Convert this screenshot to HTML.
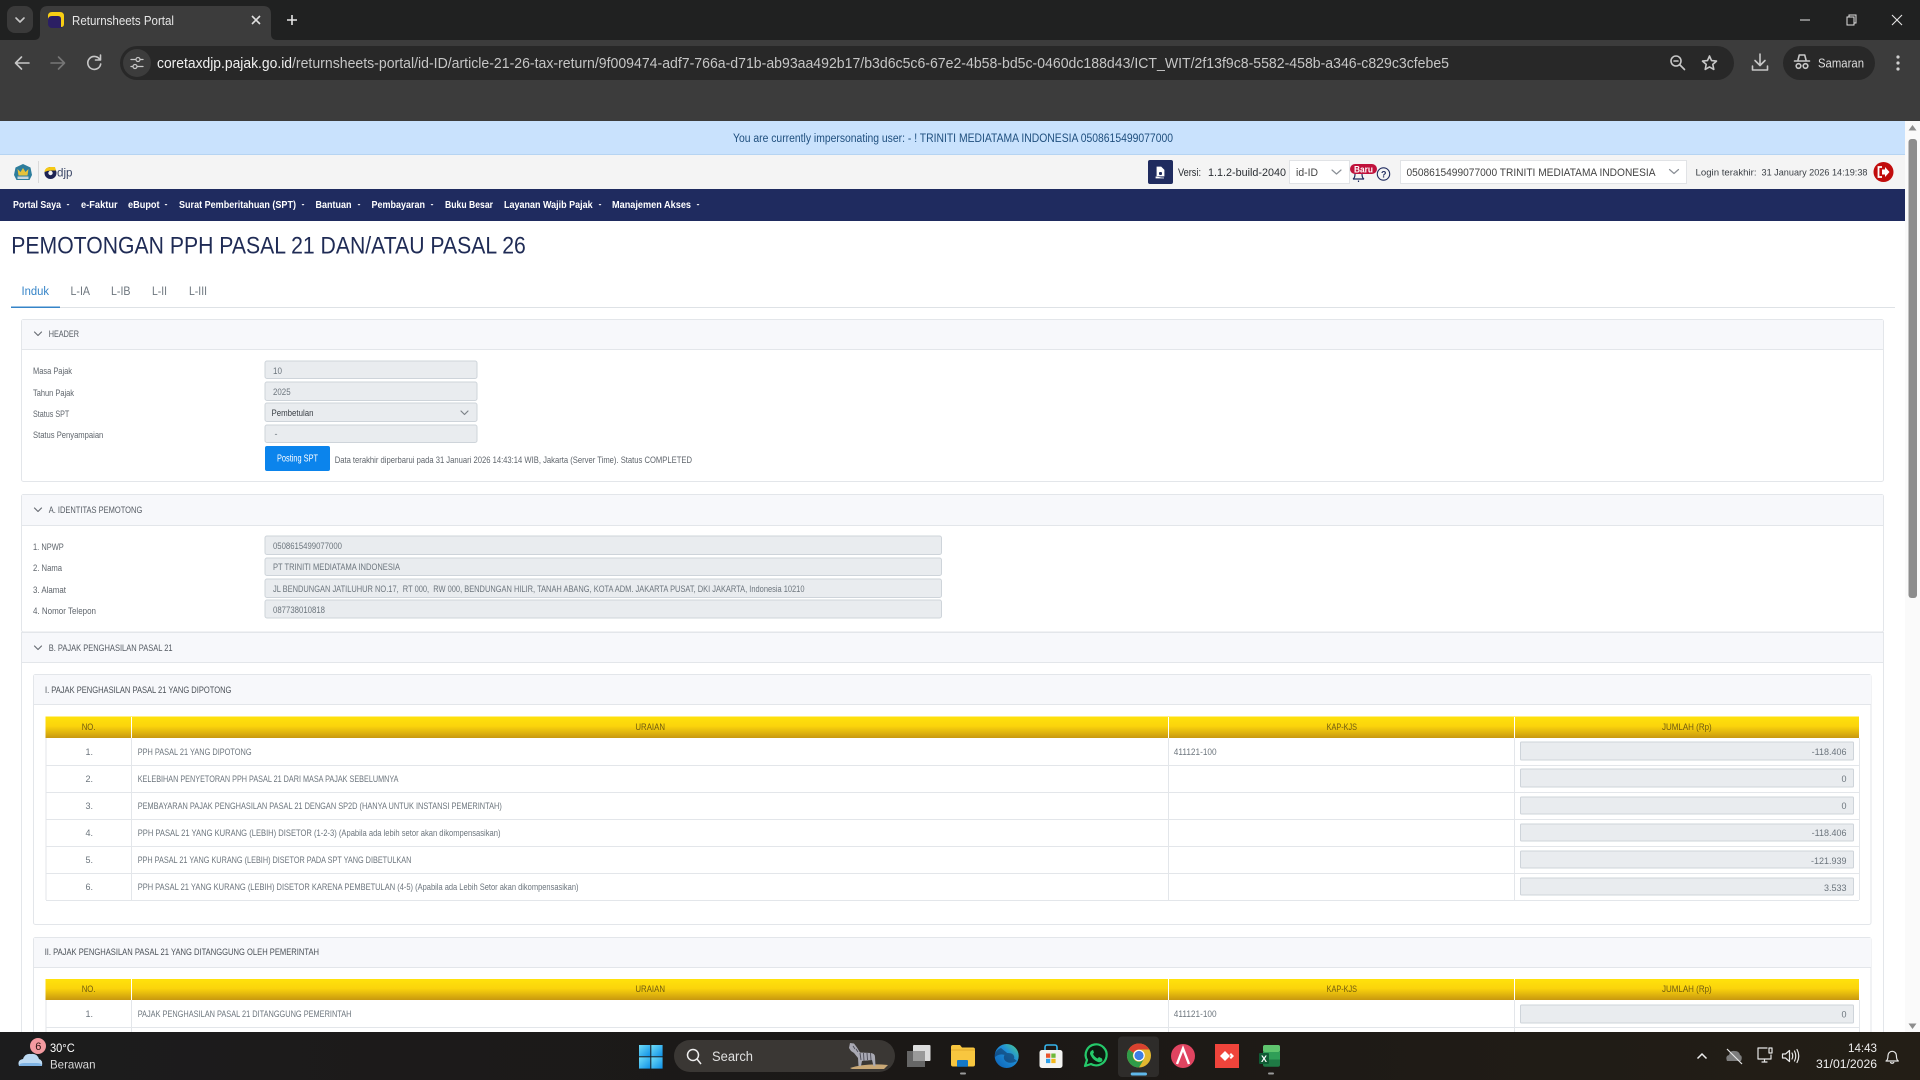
<!DOCTYPE html>
<html lang="id">
<head>
<meta charset="utf-8">
<title>Returnsheets Portal</title>
<style>
html,body{margin:0;padding:0;background:#fff;width:1920px;height:1080px;overflow:hidden}
svg{display:block;position:absolute;left:0;top:0}
text{font-family:"Liberation Sans",sans-serif;white-space:pre}
.nav{font-size:10.5px;fill:#fff;font-weight:700}
.lb{font-size:9.5px;fill:#5f656c;transform:translateY(-.7px)}
.val{font-size:9px;fill:#6c757d;transform:translateY(-.6px)}
.hd{font-size:9.5px;fill:#555b63;transform:translateY(-.6px)}
.th{font-size:9px;fill:#6f5a10;transform:translateY(-.8px)}
.inp{fill:#e9ecef;stroke:#ced4da;stroke-width:1}
.line{stroke:#e3e6ea;stroke-width:1}
.card{fill:#fff;stroke:#e3e6ea;stroke-width:1}
.chd{fill:#f7f8fb}
.ic{fill:none;stroke:#c7c7c7;stroke-width:1.6;stroke-linecap:round;stroke-linejoin:round}
.dark{fill:none;stroke:#6b6f76;stroke-width:1.2;stroke-linecap:round;stroke-linejoin:round}
.tray{fill:none;stroke:#e6e6e6;stroke-width:1.2;stroke-linecap:round;stroke-linejoin:round}
</style>
</head>
<body>
<svg width="1920" height="1080" viewBox="0 0 1920 1080" xmlns="http://www.w3.org/2000/svg">
<defs>
<linearGradient id="gold" x1="0" y1="0" x2="0" y2="1"><stop offset="0" stop-color="#ffe20c"/><stop offset=".45" stop-color="#fbd40c"/><stop offset="1" stop-color="#c8980f"/></linearGradient>
<linearGradient id="tb" x1="0" y1="0" x2="1" y2="0"><stop offset="0" stop-color="#1c1c1d"/><stop offset=".5" stop-color="#1b1816"/><stop offset="1" stop-color="#231e16"/></linearGradient>
<linearGradient id="win" x1="0" y1="0" x2="1" y2="1"><stop offset="0" stop-color="#6fdcf7"/><stop offset="1" stop-color="#0d8fe6"/></linearGradient>
<linearGradient id="edge" x1="0" y1="1" x2="1" y2="0"><stop offset="0" stop-color="#0c5fb4"/><stop offset=".6" stop-color="#1f8fd8"/><stop offset="1" stop-color="#4fd08a"/></linearGradient>
</defs>

<!-- Browser chrome -->
<rect width="1920" height="40" fill="#202121"/>
<rect y="40" width="1920" height="81" fill="#3c3c3c"/>
<rect x="7" y="6" width="26" height="27" rx="8" fill="#3a3a3a"/>
<path class="ic" d="M16 18l4 4 4-4" stroke="#ddd"/>
<path d="M34 40q6 0 6-6V14q0-8 8-8h215q8 0 8 8v20q0 6 6 6z" fill="#3c3c3c"/>
<rect x="48" y="12" width="16" height="16" rx="4" fill="#2b1f63"/>
<path d="M48 20v-4q0-4 4-4h8q4 0 4 4v8q0 3-3 3v-8q0-3-3-3h-6q-4 0-4 4z" fill="#f8cf13"/>
<text x="72" y="25" font-size="13" fill="#e6e6e6" textLength="102" lengthAdjust="spacingAndGlyphs">Returnsheets Portal</text>
<path d="M252 16l8 8M260 16l-8 8" stroke="#e0e0e0" stroke-width="1.6" fill="none"/>
<path d="M292 15v10M287 20h10" stroke="#e6e6e6" stroke-width="1.6" fill="none"/>
<path class="ic" d="M29 63H16M21.500 57l-6 6 6 6"/>
<path class="ic" style="stroke:#767676" d="M51 63h13M58.500 57l6 6-6 6"/>
<path class="ic" d="M99.500 59a6.500 6.500 0 1 0 1.200 5M100.500 55v5h-5"/>
<rect x="120" y="46" width="1614" height="34" rx="17" fill="#282828"/>
<circle cx="137" cy="63" r="14" fill="#3c3c3c"/>
<path class="ic" style="stroke-width:1.300" d="M131 59.500h4M140 59.500h3M137 66.500h6M131 66.500h2"/>
<circle cx="138" cy="59.500" r="2" fill="none" stroke="#c7c7c7" stroke-width="1.200"/>
<circle cx="135" cy="66.500" r="2" fill="none" stroke="#c7c7c7" stroke-width="1.200"/>
<text x="157" y="68" font-size="15" fill="#f0f0f0" textLength="135" lengthAdjust="spacingAndGlyphs">coretaxdjp.pajak.go.id</text>
<text x="292" y="68" font-size="15" fill="#c6c6c6" textLength="1157" lengthAdjust="spacingAndGlyphs">/returnsheets-portal/id-ID/article-21-26-tax-return/9f009474-adf7-766a-d71b-ab93aa492b17/b3d6c5c6-67e2-4b58-bd5c-0460dc188d43/ICT_WIT/2f13f9c8-5582-458b-a346-c829c3cfebe5</text>
<circle cx="1676" cy="61" r="5" class="ic"/><path class="ic" d="M1680 65l4.500 4.500M1674 61h4"/>
<path class="ic" d="M1709.500 56l2 4.600 5 .5-3.700 3.300 1 5-4.300-2.500-4.300 2.500 1-5-3.700-3.300 5-.5z"/>
<path class="ic" d="M1760 54v11M1755 60.500l5 5 5-5M1752.500 66v4h15v-4"/>
<rect x="1783" y="46" width="92" height="34" rx="17" fill="#282828"/>
<path class="ic" d="M1796 61h12M1798 60l1.300-5h5.400l1.300 5M1794.500 61h15"/><circle cx="1798.500" cy="66" r="2.300" class="ic"/><circle cx="1805.500" cy="66" r="2.300" class="ic"/>
<text x="1818" y="67.500" font-size="13" fill="#dcdcdc" textLength="46" lengthAdjust="spacingAndGlyphs">Samaran</text>
<circle cx="1898" cy="57" r="1.600" fill="#d0d0d0"/><circle cx="1898" cy="63" r="1.600" fill="#d0d0d0"/><circle cx="1898" cy="69" r="1.600" fill="#d0d0d0"/>
<path d="M1800 20h10" stroke="#e6e6e6" stroke-width="1" fill="none"/>
<rect x="1847" y="17" width="7" height="8" fill="none" stroke="#e0e0e0"/><path d="M1849 17v-2h7v8h-2" fill="none" stroke="#e0e0e0"/>
<path d="M1892 15l10 10M1902 15l-10 10" stroke="#e6e6e6" stroke-width="1.100" fill="none"/>

<!-- Impersonation banner + top bar -->
<rect y="121" width="1905" height="33" fill="#c9e2fd"/>
<rect y="154" width="1905" height="1" fill="#b6d4f2"/>
<text x="733" y="142" font-size="11.500" fill="#1f4f7e" textLength="440" lengthAdjust="spacingAndGlyphs">You are currently impersonating user: - ! TRINITI MEDIATAMA INDONESIA 0508615499077000</text>
<rect y="155" width="1905" height="34" fill="#f4f4f4"/>
<rect y="189" width="1905" height="32" fill="#1f2b5f"/>
<!-- logos -->
<path d="M23 164l7.500 3.500 1.500 7.500-2.500 5H16.500L14 175l1.500-7.500z" fill="#2d7d9c"/>
<path d="M17.500 169l3 3 2.500-4 2.500 4 3-3-1 6.500h-9z" fill="#e6c23a"/>
<rect x="17.500" y="176.500" width="11" height="2.500" fill="#c9d7de"/>
<rect x="38" y="161" width="1" height="22" fill="#dadada"/>
<circle cx="50.500" cy="173" r="6" fill="#1d2353"/>
<path d="M44.500 172q.5-5 6-5h4.500l1 3.500h-5q-3.500 0-6.500 1.500z" fill="#f6c915"/><circle cx="50.500" cy="173" r="2.200" fill="#f4f4f4"/>
<text x="57" y="176.500" font-size="12" fill="#3b4767" textLength="15.500" lengthAdjust="spacingAndGlyphs">djp</text>
<!-- right header -->
<rect x="1148" y="160" width="25" height="24" rx="2" fill="#1f2b5f"/>
<path d="M1157 167h4l3 3v6h-7zM1160 170v-3M1156 176.500v1.500h8" fill="#fff" stroke="#fff" stroke-width=".8"/><rect x="1159" y="172" width="3" height="3" rx="1" fill="#1f2b5f"/>
<text x="1178" y="176" font-size="11" fill="#2a2e33" textLength="23" lengthAdjust="spacingAndGlyphs">Versi:</text>
<text x="1208" y="176" font-size="11" fill="#2a2e33" textLength="78" lengthAdjust="spacingAndGlyphs">1.1.2-build-2040</text>
<rect x="1289.500" y="160.500" width="60" height="23" fill="#fff" stroke="#e1e3e6"/>
<text x="1296" y="176" font-size="11" fill="#444" textLength="22" lengthAdjust="spacingAndGlyphs">id-ID</text>
<path class="dark" d="M1332 170l4.500 4 4.500-4" style="stroke:#8a8f96"/>
<path d="M1353 179q2-1 2-5a4 4 0 0 1 7 0q0 4 2 5zM1358.500 180.500v1.500" fill="none" stroke="#1f2b5f" stroke-width="1.200"/>
<rect x="1350" y="164" width="27" height="10" rx="5" fill="#c0123c"/>
<text x="1354" y="172.500" font-size="9" font-weight="700" fill="#fff" textLength="19" lengthAdjust="spacingAndGlyphs">Baru</text>
<circle cx="1383.500" cy="174" r="6.200" fill="none" stroke="#1f2b5f" stroke-width="1.100"/>
<text x="1381" y="177.500" font-size="9" font-weight="700" fill="#1f2b5f">?</text>
<rect x="1400.500" y="160.500" width="286" height="23" fill="#fff" stroke="#e1e3e6"/>
<text x="1406.500" y="176" font-size="11" fill="#444" textLength="249" lengthAdjust="spacingAndGlyphs">0508615499077000 TRINITI MEDIATAMA INDONESIA</text>
<path class="dark" d="M1669.500 169.500l4.500 4 4.500-4" style="stroke:#8a8f96"/>
<text x="1695.500" y="175.500" font-size="9.500" fill="#3a3f45" textLength="61" lengthAdjust="spacingAndGlyphs">Login terakhir:</text>
<text x="1761.500" y="175.500" font-size="9.500" fill="#3a3f45" textLength="106" lengthAdjust="spacingAndGlyphs">31 January 2026 14:19:38</text>
<circle cx="1883.500" cy="172" r="10" fill="#c10c0c"/>
<path d="M1882 167h-3.500v10h3.500" fill="none" stroke="#fff" stroke-width="1.800"/><path d="M1882 169.500h3v-2.500l4.500 5-4.500 5v-2.500h-3z" fill="#fff"/>

<!-- Nav -->
<text class="nav" x="13" y="208" textLength="48" lengthAdjust="spacingAndGlyphs">Portal Saya</text><path d="M66.500 204h3l-1.500 1.600z" fill="#fff"/>
<text class="nav" x="81" y="208" textLength="36.600" lengthAdjust="spacingAndGlyphs">e-Faktur</text>
<text class="nav" x="128" y="208" textLength="31.600" lengthAdjust="spacingAndGlyphs">eBupot</text><path d="M164.500 204h3l-1.500 1.600z" fill="#fff"/>
<text class="nav" x="179" y="208" textLength="117" lengthAdjust="spacingAndGlyphs">Surat Pemberitahuan (SPT)</text><path d="M301.500 204h3l-1.500 1.600z" fill="#fff"/>
<text class="nav" x="315.500" y="208" textLength="36" lengthAdjust="spacingAndGlyphs">Bantuan</text><path d="M357.500 204h3l-1.500 1.600z" fill="#fff"/>
<text class="nav" x="371.500" y="208" textLength="53.500" lengthAdjust="spacingAndGlyphs">Pembayaran</text><path d="M430.500 204h3l-1.500 1.600z" fill="#fff"/>
<text class="nav" x="445" y="208" textLength="48" lengthAdjust="spacingAndGlyphs">Buku Besar</text>
<text class="nav" x="504" y="208" textLength="88.600" lengthAdjust="spacingAndGlyphs">Layanan Wajib Pajak</text><path d="M598.500 204h3l-1.500 1.600z" fill="#fff"/>
<text class="nav" x="612" y="208" textLength="79" lengthAdjust="spacingAndGlyphs">Manajemen Akses</text><path d="M696.500 204h3l-1.500 1.600z" fill="#fff"/>

<!-- Title + tabs -->
<text x="11.300" y="253.500" font-size="24" fill="#1f2b55" textLength="514.500" lengthAdjust="spacingAndGlyphs">PEMOTONGAN PPH PASAL 21 DAN/ATAU PASAL 26</text>
<text x="21.500" y="295" font-size="11.500" fill="#3584c8" textLength="27.500" lengthAdjust="spacingAndGlyphs">Induk</text>
<text x="70.500" y="295" font-size="11.500" fill="#6c757d" textLength="19.500" lengthAdjust="spacingAndGlyphs">L-IA</text>
<text x="111" y="295" font-size="11.500" fill="#6c757d" textLength="19.500" lengthAdjust="spacingAndGlyphs">L-IB</text>
<text x="152" y="295" font-size="11.500" fill="#6c757d" textLength="15" lengthAdjust="spacingAndGlyphs">L-II</text>
<text x="189" y="295" font-size="11.500" fill="#6c757d" textLength="18" lengthAdjust="spacingAndGlyphs">L-III</text>
<rect x="11" y="307" width="1884" height="1" fill="#dee2e6"/>
<rect x="11" y="306.500" width="49" height="1.500" fill="#3584c8"/>

<!-- HEADER card -->
<rect class="card" x="21.500" y="319.500" width="1862" height="162" rx="2"/>
<rect class="chd" x="22" y="320" width="1861" height="29"/><rect x="22" y="349" width="1861" height="1" fill="#e3e6ea"/>
<path class="dark" d="M34.500 332l3.500 3.500 3.500-3.500"/>
<text class="hd" x="48.700" y="337.500" textLength="30.300" lengthAdjust="spacingAndGlyphs">HEADER</text>
<text class="lb" x="33" y="374.500" textLength="39" lengthAdjust="spacingAndGlyphs">Masa Pajak</text>
<text class="lb" x="33" y="396.500" textLength="41" lengthAdjust="spacingAndGlyphs">Tahun Pajak</text>
<text class="lb" x="33" y="417.500" textLength="36.300" lengthAdjust="spacingAndGlyphs">Status SPT</text>
<text class="lb" x="33" y="438.500" textLength="70.300" lengthAdjust="spacingAndGlyphs">Status Penyampaian</text>
<rect class="inp" x="265" y="361" width="212" height="17.500" rx="2"/>
<rect class="inp" x="265" y="382" width="212" height="18.500" rx="2"/>
<rect class="inp" x="265" y="403" width="212" height="18.500" rx="2"/>
<rect class="inp" x="265" y="425" width="212" height="17.500" rx="2"/>
<text class="val" x="273" y="374.500" textLength="9" lengthAdjust="spacingAndGlyphs">10</text>
<text class="val" x="273" y="395.500" textLength="17.600" lengthAdjust="spacingAndGlyphs">2025</text>
<text class="val" x="271.500" y="416.500" style="fill:#3b4046" textLength="42" lengthAdjust="spacingAndGlyphs">Pembetulan</text>
<path class="dark" d="M461 411l3.500 3.500 3.500-3.500" style="stroke:#7d8288"/>
<text class="val" x="274.500" y="437.500">-</text>
<rect x="265" y="446" width="65" height="25" rx="2" fill="#0b84ec"/>
<text x="277" y="461.500" font-size="10" fill="#fff" textLength="41" lengthAdjust="spacingAndGlyphs">Posting SPT</text>
<text class="lb" x="334.700" y="463.500" textLength="357.300" lengthAdjust="spacingAndGlyphs">Data terakhir diperbarui pada 31 Januari 2026 14:43:14 WIB, Jakarta (Server Time). Status COMPLETED</text>

<!-- A card -->
<rect class="card" x="21.500" y="494.500" width="1862" height="137.500" rx="2"/>
<rect class="chd" x="22" y="495" width="1861" height="30"/><rect x="22" y="525" width="1861" height="1" fill="#e3e6ea"/>
<path class="dark" d="M34.500 508l3.500 3.500 3.500-3.500"/>
<text class="hd" x="48.700" y="513.500" textLength="93.600" lengthAdjust="spacingAndGlyphs">A. IDENTITAS PEMOTONG</text>
<text class="lb" x="33" y="550.500" textLength="30.800" lengthAdjust="spacingAndGlyphs">1. NPWP</text>
<text class="lb" x="33" y="571.500" textLength="29" lengthAdjust="spacingAndGlyphs">2. Nama</text>
<text class="lb" x="33" y="593.500" textLength="33" lengthAdjust="spacingAndGlyphs">3. Alamat</text>
<text class="lb" x="33" y="614.500" textLength="63" lengthAdjust="spacingAndGlyphs">4. Nomor Telepon</text>
<rect class="inp" x="265" y="536" width="676.500" height="18.500" rx="2"/>
<rect class="inp" x="265" y="558" width="676.500" height="17.500" rx="2"/>
<rect class="inp" x="265" y="579" width="676.500" height="18.500" rx="2"/>
<rect class="inp" x="265" y="600" width="676.500" height="18" rx="2"/>
<text class="val" x="273" y="549.500" textLength="69" lengthAdjust="spacingAndGlyphs">0508615499077000</text>
<text class="val" x="273" y="570.500" textLength="127" lengthAdjust="spacingAndGlyphs">PT TRINITI MEDIATAMA INDONESIA</text>
<text class="val" x="273" y="592.500" textLength="531.500" lengthAdjust="spacingAndGlyphs">JL BENDUNGAN JATILUHUR NO.17,  RT 000,  RW 000, BENDUNGAN HILIR, TANAH ABANG, KOTA ADM. JAKARTA PUSAT, DKI JAKARTA, Indonesia 10210</text>
<text class="val" x="273" y="613.500" textLength="52" lengthAdjust="spacingAndGlyphs">087738010818</text>

<!-- B card -->
<rect class="card" x="21.500" y="632.500" width="1862" height="420"/>
<rect class="chd" x="22" y="633" width="1861" height="29"/><rect x="22" y="662" width="1861" height="1" fill="#e3e6ea"/>
<path class="dark" d="M34.500 646l3.500 3.500 3.500-3.500"/>
<text class="hd" x="48.700" y="651.500" textLength="123.900" lengthAdjust="spacingAndGlyphs">B. PAJAK PENGHASILAN PASAL 21</text>

<!-- Sub card I -->
<rect class="card" x="33.500" y="674.500" width="1837.500" height="250" rx="2"/>
<rect class="chd" x="34" y="675" width="1837" height="29"/><rect x="34" y="704" width="1837" height="1" fill="#e3e6ea"/>
<text class="hd" x="45" y="693.500" style="fill:#4a5057" textLength="186.400" lengthAdjust="spacingAndGlyphs">I. PAJAK PENGHASILAN PASAL 21 YANG DIPOTONG</text>

<rect x="45.500" y="716.500" width="1813.500" height="21.500" fill="url(#gold)"/>
<rect x="131" y="717" width="1" height="21" fill="#fff"/><rect x="1168" y="717" width="1" height="21" fill="#fff"/><rect x="1514" y="717" width="1" height="21" fill="#fff"/>
<text class="th" x="81.700" y="731" textLength="13.800" lengthAdjust="spacingAndGlyphs">NO.</text>
<text class="th" x="635.400" y="731" textLength="29.600" lengthAdjust="spacingAndGlyphs">URAIAN</text>
<text class="th" x="1326.600" y="731" textLength="30.400" lengthAdjust="spacingAndGlyphs">KAP-KJS</text>
<text class="th" x="1662" y="731" textLength="49.700" lengthAdjust="spacingAndGlyphs">JUMLAH (Rp)</text>
<path class="line" fill="none" d="M46 765.500H1859M46 792.500H1859M46 819.500H1859M46 846.500H1859M46 873.500H1859M46 900.500H1859M46 738V900M131.500 738V900M1168.500 738V900M1514.500 738V900M1859.500 738V900"/>
<text class="val" x="85.500" y="755.500">1.</text>
<text class="val" x="85.500" y="782.500">2.</text>
<text class="val" x="85.500" y="809.500">3.</text>
<text class="val" x="85.500" y="836.500">4.</text>
<text class="val" x="85.500" y="863.500">5.</text>
<text class="val" x="85.500" y="890.500">6.</text>
<text class="val" x="137.700" y="755.500" textLength="113.900" lengthAdjust="spacingAndGlyphs">PPH PASAL 21 YANG DIPOTONG</text>
<text class="val" x="137.700" y="782.500" textLength="260.800" lengthAdjust="spacingAndGlyphs">KELEBIHAN PENYETORAN PPH PASAL 21 DARI MASA PAJAK SEBELUMNYA</text>
<text class="val" x="137.700" y="809.500" textLength="364.100" lengthAdjust="spacingAndGlyphs">PEMBAYARAN PAJAK PENGHASILAN PASAL 21 DENGAN SP2D (HANYA UNTUK INSTANSI PEMERINTAH)</text>
<text class="val" x="137.700" y="836.500" textLength="362.800" lengthAdjust="spacingAndGlyphs">PPH PASAL 21 YANG KURANG (LEBIH) DISETOR (1-2-3) (Apabila ada lebih setor akan dikompensasikan)</text>
<text class="val" x="137.700" y="863.500" textLength="273.700" lengthAdjust="spacingAndGlyphs">PPH PASAL 21 YANG KURANG (LEBIH) DISETOR PADA SPT YANG DIBETULKAN</text>
<text class="val" x="137.700" y="890.500" textLength="440.800" lengthAdjust="spacingAndGlyphs">PPH PASAL 21 YANG KURANG (LEBIH) DISETOR KARENA PEMBETULAN (4-5) (Apabila ada Lebih Setor akan dikompensasikan)</text>
<text class="val" x="1173.800" y="755.500" textLength="42.800" lengthAdjust="spacingAndGlyphs">411121-100</text>
<rect class="inp" x="1520.500" y="742" width="333" height="18" rx="1"/>
<rect class="inp" x="1520.500" y="769" width="333" height="18" rx="1"/>
<rect class="inp" x="1520.500" y="797" width="333" height="17" rx="1"/>
<rect class="inp" x="1520.500" y="824" width="333" height="17" rx="1"/>
<rect class="inp" x="1520.500" y="851" width="333" height="17" rx="1"/>
<rect class="inp" x="1520.500" y="878" width="333" height="17" rx="1"/>
<text class="val" x="1846.500" y="755.500" text-anchor="end">-118.406</text>
<text class="val" x="1846.500" y="782.500" text-anchor="end">0</text>
<text class="val" x="1846.500" y="809.500" text-anchor="end">0</text>
<text class="val" x="1846.500" y="836.500" text-anchor="end">-118.406</text>
<text class="val" x="1846.500" y="864.500" text-anchor="end">-121.939</text>
<text class="val" x="1846.500" y="891.500" text-anchor="end">3.533</text>

<!-- Sub card II -->
<rect class="card" x="33.500" y="937.500" width="1837.500" height="130" rx="2"/>
<rect class="chd" x="34" y="938" width="1837" height="29"/><rect x="34" y="967" width="1837" height="1" fill="#e3e6ea"/>
<text class="hd" x="44.700" y="955.800" style="fill:#4a5057" textLength="274.300" lengthAdjust="spacingAndGlyphs">II. PAJAK PENGHASILAN PASAL 21 YANG DITANGGUNG OLEH PEMERINTAH</text>
<rect x="45.500" y="979" width="1813.500" height="21" fill="url(#gold)"/>
<rect x="131" y="979" width="1" height="21" fill="#fff"/><rect x="1168" y="979" width="1" height="21" fill="#fff"/><rect x="1514" y="979" width="1" height="21" fill="#fff"/>
<text class="th" x="81.700" y="993" textLength="13.800" lengthAdjust="spacingAndGlyphs">NO.</text>
<text class="th" x="635.400" y="993" textLength="29.600" lengthAdjust="spacingAndGlyphs">URAIAN</text>
<text class="th" x="1326.600" y="993" textLength="30.400" lengthAdjust="spacingAndGlyphs">KAP-KJS</text>
<text class="th" x="1662" y="993" textLength="49.700" lengthAdjust="spacingAndGlyphs">JUMLAH (Rp)</text>
<path class="line" fill="none" d="M46 1027.500H1859M46 1000V1032M131.500 1000V1032M1168.500 1000V1032M1514.500 1000V1032M1859.500 1000V1032"/>
<text class="val" x="85.500" y="1017.500">1.</text>
<text class="val" x="137.700" y="1017.500" textLength="213.800" lengthAdjust="spacingAndGlyphs">PAJAK PENGHASILAN PASAL 21 DITANGGUNG PEMERINTAH</text>
<text class="val" x="1173.800" y="1017.500" textLength="42.800" lengthAdjust="spacingAndGlyphs">411121-100</text>
<rect class="inp" x="1520.500" y="1005" width="333" height="18" rx="1"/>
<text class="val" x="1846.500" y="1018" text-anchor="end">0</text>

<!-- Scrollbar -->
<rect x="1905" y="121" width="15" height="911" fill="#fafafa"/>
<path d="M1912.500 125l4 5.500h-8z" fill="#8d8d8d"/>
<rect x="1908.500" y="139" width="8.500" height="459" rx="3" fill="#8d8d8d"/>
<path d="M1912.500 1029l4-5.500h-8z" fill="#8d8d8d"/>

<!-- Taskbar -->
<rect y="1032" width="1920" height="48" fill="url(#tb)"/>
<path d="M19 1066q-2-6 4-7 2-6 8-5 6-1 8 5 4 1 3 7z" fill="#bcd9f2"/>
<path d="M19 1066q0-3 5-3h13q5 0 5 3z" fill="#7fb3e4"/>
<circle cx="38" cy="1046" r="8" fill="#f39aa0"/>
<text x="35.200" y="1050" font-size="11" fill="#2a1512">6</text>
<text x="50" y="1052" font-size="12" fill="#fff" textLength="24.700" lengthAdjust="spacingAndGlyphs">30°C</text>
<text x="50" y="1068.500" font-size="12" fill="#d8d8d8" textLength="45.500" lengthAdjust="spacingAndGlyphs">Berawan</text>
<!-- Start -->
<rect x="639" y="1045" width="11.300" height="11.300" fill="url(#win)"/><rect x="651.300" y="1045" width="11.300" height="11.300" fill="url(#win)"/>
<rect x="639" y="1057.300" width="11.300" height="11.300" fill="url(#win)"/><rect x="651.300" y="1057.300" width="11.300" height="11.300" fill="url(#win)"/>
<!-- Search -->
<rect x="674" y="1040" width="221" height="32" rx="16" fill="#3a3734"/>
<circle cx="693" cy="1055" r="5.500" fill="none" stroke="#eee" stroke-width="1.500"/><path d="M697 1059l4 5" stroke="#eee" stroke-width="1.500" fill="none"/>
<text x="712" y="1061" font-size="13.500" fill="#e0e0e0" textLength="41" lengthAdjust="spacingAndGlyphs">Search</text>
<!-- search highlight: zebra on a wood base -->
<path d="M850 1068q16-5 38-3l-4 4h-32z" fill="#c9a876"/>
<path d="M850 1043l4 .5 3 4 3 5 11 .5q4 .5 4 4l.5 9h-2l-1.500-6-10 1-1 5h-2.500l-.5-8-4-5-3-2-2-3z" fill="#a9a9b3"/>
<path d="M860 1053l1 7M863.500 1053l.5 8M867 1053l.5 7M870.500 1053l.5 7M853 1046l2 3M856 1049l2 3" stroke="#4a4a56" stroke-width=".9" fill="none"/>
<!-- Task view -->
<rect x="907" y="1051" width="18" height="16" fill="#666"/>
<rect x="913" y="1045" width="17.500" height="16" rx="1" fill="#dcdcdc"/>
<rect x="913" y="1051" width="12" height="10" fill="#9a9a9a"/>
<!-- Explorer -->
<path d="M951 1047q0-2 2-2h7l2 2.500h11q2 0 2 2v15q0 2-2 2h-20q-2 0-2-2z" fill="#f8c63f"/>
<path d="M951 1050h24" stroke="#e2a92b" stroke-width="1"/>
<rect x="957" y="1060" width="11" height="6.700" rx="1" fill="#1478c8"/>
<rect x="960" y="1072.500" width="6" height="2" rx="1" fill="#9a9a9a"/>
<!-- Edge -->
<circle cx="1006.700" cy="1056" r="12" fill="url(#edge)"/>
<path d="M1017 1061q-6 3-10 1-4-2-3-6 1-3 4-3 5 0 6 3 1 3-2 3 0-4-5-3-7-4-13 2 1-8 7-10" fill="#0f2f5a" opacity=".55"/>
<!-- Store -->
<path d="M1045 1050v-2.500q0-2.500 2-2.500h8q2 0 2 2.500v2.500" fill="none" stroke="#35b4ec" stroke-width="1.600"/>
<rect x="1039.500" y="1050" width="23" height="18" rx="2.500" fill="#f4f4f2"/>
<rect x="1046" y="1053.500" width="4.300" height="4.300" fill="#e8532c"/><rect x="1051.300" y="1053.500" width="4.300" height="4.300" fill="#6db93a"/>
<rect x="1046" y="1058.800" width="4.300" height="4.300" fill="#2ea0e8"/><rect x="1051.300" y="1058.800" width="4.300" height="4.300" fill="#f5b81c"/>
<!-- WhatsApp -->
<path d="M1085 1066l2-6a10.500 10.500 0 1 1 4 4z" fill="#0d1a10" stroke="#25c96a" stroke-width="2.200" stroke-linejoin="round"/>
<path d="M1091 1051q-2 2 0 5 2 4 7 6 3 1 4.500-1.500l-.5-2-3-1.500-1.500 1.500q-3-1.500-4.500-4.500l1-1.500-1-2.800z" fill="#25c96a"/>
<!-- Chrome -->
<rect x="1118" y="1036.500" width="41" height="40.500" rx="4" fill="#2e2c2a"/>
<circle cx="1139" cy="1055.500" r="12" fill="#e3b830"/>
<path d="M1128.600 1049.500a12 12 0 0 1 20.800 0H1139a6 6 0 0 0-5.500 3.500z" fill="#d8412f"/>
<path d="M1128.600 1049.500a12 12 0 0 0 10.400 18l5.200-9a6 6 0 0 1-10.700-5.500z" fill="#2f9b48"/>
<circle cx="1139" cy="1055.500" r="5.800" fill="#fff"/><circle cx="1139" cy="1055.500" r="4.600" fill="#3d7ee6"/>
<rect x="1130.700" y="1072.500" width="16.300" height="3" rx="1.500" fill="#5fb8ea"/>
<!-- Red circle -->
<circle cx="1183" cy="1056" r="12" fill="#e04460"/>
<path d="M1177 1064l6-15.500 6 15.500" fill="none" stroke="#fff" stroke-width="2.400"/>
<!-- Red square -->
<rect x="1215" y="1044" width="24" height="24" fill="#ef443b"/>
<path d="M1225 1051l5 5-5 5-5-5z" fill="#fff"/><path d="M1231 1053l3 3-3 3-1.500-1.500 1.500-1.500-1.500-1.500z" fill="#fff"/>
<!-- Excel -->
<rect x="1263" y="1045" width="17" height="21.700" rx="2" fill="#1f7a45"/>
<rect x="1263" y="1045" width="17" height="7" rx="2" fill="#5fc46e"/>
<rect x="1263" y="1052" width="17" height="7.500" fill="#2f9e57"/>
<rect x="1259" y="1053" width="10" height="11" rx="1" fill="#0f5a33"/>
<text x="1261" y="1062" font-size="9" font-weight="700" fill="#fff">X</text>
<rect x="1268" y="1072.500" width="6" height="2" rx="1" fill="#9a9a9a"/>
<!-- Tray -->
<path d="M1697.500 1058.500l4.500-4.500 4.500 4.500" fill="none" stroke="#eee" stroke-width="1.500"/>
<path d="M1727 1061q-2-5 2-6 1-5 6-4 4 0 5 4 3 1 1 6z" fill="#7d7d7d"/><path d="M1727 1049l15 15" stroke="#e6e6e6" stroke-width="1.200"/>
<path class="tray" d="M1771 1055v4h-13v-11h9M1762 1062h5M1764.500 1059v3"/>
<rect x="1769" y="1048" width="3" height="5" class="tray"/>
<path class="tray" d="M1782.500 1054h3l4-3.500v11l-4-3.500h-3zM1792 1053q1.500 3 0 6M1794.500 1051q2.500 5 0 10M1797 1049.500q3.500 6.500 0 13"/>
<text x="1877" y="1052" font-size="11.500" fill="#f0f0f0" text-anchor="end" textLength="29" lengthAdjust="spacingAndGlyphs">14:43</text>
<text x="1877" y="1068" font-size="11.500" fill="#f0f0f0" text-anchor="end" textLength="61" lengthAdjust="spacingAndGlyphs">31/01/2026</text>
<path class="tray" d="M1886 1061q2-1 2-5.500a4.200 4.200 0 0 1 8.400 0q0 4.500 2 5.500zM1890.500 1062.500q1.700 1.500 3.300 0"/>
</svg>
</body>
</html>
